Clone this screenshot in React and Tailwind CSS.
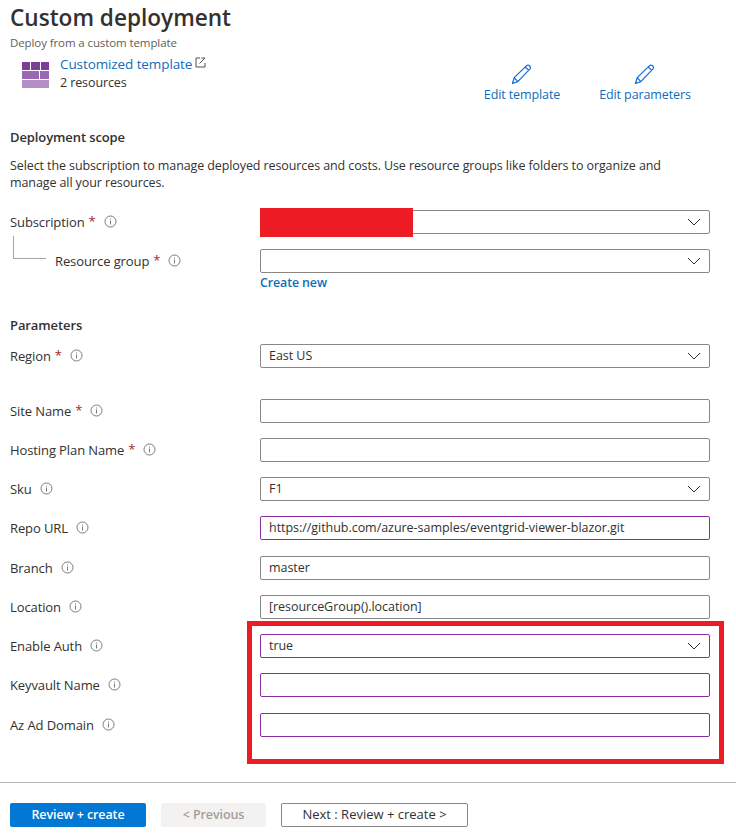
import React from "react";

function Info() {
  return (
    <svg width="13" height="13" viewBox="0 0 13 13" className="shrink-0">
      <circle cx="6.5" cy="6.5" r="5.5" fill="none" stroke="#7a7a7a" strokeWidth="1" />
      <rect x="6" y="5.5" width="1" height="4" fill="#7a7a7a" />
      <rect x="6" y="3.5" width="1" height="1" fill="#7a7a7a" />
    </svg>
  );
}

function Chevron() {
  return (
    <svg width="14" height="8" viewBox="0 0 14 8" className="shrink-0">
      <path d="M1 1 L7 7 L13 1" fill="none" stroke="#323130" strokeWidth="1" />
    </svg>
  );
}

function Pencil() {
  return (
    <svg width="21" height="21" viewBox="0 0 21 21" className="mr-[2px]">
      <path d="M1.5 19.5 L3.2 13.6 L15.6 1.6 Q17 0.6 18.6 1.8 Q20 3.4 19 4.9 L6.8 17.6 Z M3.2 13.6 L6.8 17.6 M14.2 3 L17.8 6.4" fill="none" stroke="#1a6fd8" strokeWidth="1.3" strokeLinejoin="round" />
    </svg>
  );
}

function Field({ value, select, purple }) {
  return (
    <div className={`w-[450px] h-[24px] rounded-[2px] border bg-white flex items-center justify-between pl-[8px] pr-[8px] text-[12.5px] tracking-[-0.04px] text-[#323130] ${purple ? "border-[#8a2da5]" : "border-[#8a8886]"}`}>
      <span className="whitespace-nowrap pt-[2px]">{value}</span>
      {select ? <Chevron /> : null}
    </div>
  );
}

function Label({ text, required }) {
  return (
    <div className="w-[250px] shrink-0 flex items-center text-[13px] text-[#323130] whitespace-nowrap">
      <span className="pt-[1px]">{text}</span>
      {required ? <span className="text-[#a4262c] ml-[4px]">*</span> : null}
      <span className="ml-[8px] flex"><Info /></span>
    </div>
  );
}

function Row({ className, ...p }) {
  return (
    <div className={`flex items-center ${className}`}>
      <Label text={p.label} required={p.required} />
      <Field value={p.value} select={p.select} purple={p.purple} />
    </div>
  );
}

export default function App() {
  return (
    <div className="relative w-[736px] h-[838px] bg-white overflow-hidden font-['Open_Sans','Noto_Sans',sans-serif] tracking-[-0.1px]">
      <div className="px-[10px]">
        <h1 className="text-[22.6px] leading-[28px] pt-[4px] font-semibold text-[#323130] tracking-normal">Custom deployment</h1>
        <p className="text-[11.5px] leading-[16px] mt-[3px] text-[#605e5c]">Deploy from a custom template</p>

        <div className="flex items-start mt-[4px]">
          <div className="ml-[12px] mt-[7px] w-[27px] flex flex-col gap-[1px] shrink-0">
            <div className="flex gap-[1px]">
              <div className="h-[8px] flex-1 bg-[#7b3f98]" />
              <div className="h-[8px] flex-1 bg-[#7b3f98]" />
              <div className="h-[8px] flex-1 bg-[#7b3f98]" />
            </div>
            <div className="flex gap-[1px]">
              <div className="h-[8px] flex-[2] bg-[#9a68b0]" />
              <div className="h-[8px] flex-1 bg-[#9a68b0]" />
            </div>
            <div className="h-[8px] bg-[#b48fc5]" />
          </div>
          <div className="ml-[11px] w-[200px]">
            <div className="flex items-center h-[18px] text-[13.5px] text-[#0f6cbd]">
              <span>Customized template</span>
              <svg width="11" height="11" viewBox="0 0 11 11" className="ml-[3px] mb-[3px]">
                <path d="M5 1 H1 V10 H10 V6 M4.5 6.5 L10 1 M6.5 1 H10" fill="none" stroke="#505050" strokeWidth="1" />
              </svg>
            </div>
            <div className="text-[12.5px] leading-[18px] mt-[1px] text-[#323130]">2 resources</div>
          </div>
          <div className="flex flex-col items-center w-[76px] ml-[224px] mt-[9px] text-[12.5px] text-[#0f6cbd]">
            <Pencil />
            <span className="mt-[1px] whitespace-nowrap">Edit template</span>
          </div>
          <div className="flex flex-col items-center w-[90px] ml-[40px] mt-[9px] text-[12.5px] text-[#0f6cbd]">
            <Pencil />
            <span className="mt-[1px] whitespace-nowrap">Edit parameters</span>
          </div>
        </div>

        <h2 className="text-[13px] leading-[18px] mt-[23px] font-semibold text-[#323130]">Deployment scope</h2>
        <p className="text-[12.5px] leading-[17px] mt-[11px] text-[#323130] w-[680px]">
          Select the subscription to manage deployed resources and costs. Use resource groups like folders to organize and manage all your resources.
        </p>

        <Row className="mt-[19px]" label="Subscription" required select value="" />

        <div className="flex items-center mt-[15px] relative">
          <div className="w-[250px] shrink-0 flex">
            <div className="absolute left-[3px] top-[-13px] w-[33px] h-[23px] border-l border-b border-[#a6a6a6]" />
            <div className="ml-[45px]"><Label text="Resource group" required /></div>
          </div>
          <Field value="" select />
        </div>
        <div className="ml-[250px] mt-[1px] text-[12.4px] leading-[18px] font-semibold text-[#0f6cbd]">Create new</div>

        <h2 className="text-[13px] leading-[18px] mt-[24px] font-semibold text-[#323130]">Parameters</h2>

        <Row className="mt-[10px]" label="Region" required select value="East US" />
        <Row className="mt-[31px]" label="Site Name" required value="" />
        <Row className="mt-[15px]" label="Hosting Plan Name" required value="" />
        <Row className="mt-[15px]" label="Sku" select value="F1" />
        <Row className="mt-[15px]" label="Repo URL" purple value="https://github.com/azure-samples/eventgrid-viewer-blazor.git" />
        <Row className="mt-[16px]" label="Branch" value="master" />
        <Row className="mt-[15px]" label="Location" value="[resourceGroup().location]" />
        <Row className="mt-[15px]" label="Enable Auth" select purple value="true" />
        <Row className="mt-[15px]" label="Keyvault Name" purple value="" />
        <Row className="mt-[16px]" label="Az Ad Domain" purple value="" />
      </div>

      <div className="mt-[45px] border-t border-[#b5b5b5]" />

      <div className="flex items-center px-[10px] mt-[20px] text-[12.5px]">
        <div className="w-[136px] h-[24px] pt-[1px] rounded-[2px] bg-[#0078d4] text-white font-semibold flex items-center justify-center">Review + create</div>
        <div className="w-[105px] h-[24px] pt-[1px] ml-[15px] rounded-[2px] bg-[#f3f2f1] text-[#a19f9d] font-semibold flex items-center justify-center">&lt; Previous</div>
        <div className="w-[187px] h-[24px] ml-[15px] rounded-[2px] border border-[#8a8886] bg-white text-[13px] tracking-normal text-[#323130] flex items-center justify-center">Next : Review + create &gt;</div>
      </div>

      <div className="absolute left-[260px] top-[208px] w-[153px] h-[29px] bg-[#ed1c24]" />
      <div className="absolute left-[247px] top-[621px] w-[477px] h-[143px] border-[5px] border-[#ed1c24]" />
    </div>
  );
}
